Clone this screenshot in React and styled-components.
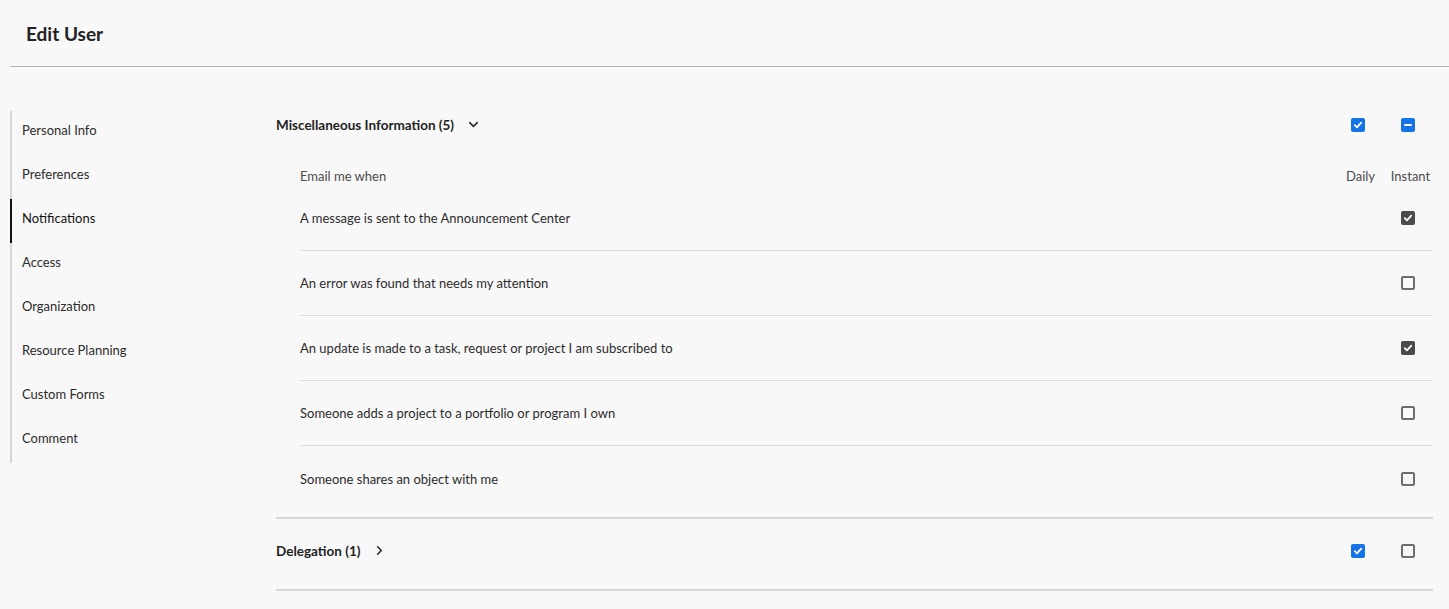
import React from 'react';
import styled, { createGlobalStyle } from 'styled-components';
import { ChevronDown, ChevronRight } from 'lucide-react';

const GlobalStyle = createGlobalStyle`
  body {
    margin: 0;
    background: #f8f8f8;
    font-family: Lato, "Noto Sans", sans-serif;
    color: #2c2c2c;
  }
`;

const navItems = [
  'Personal Info',
  'Preferences',
  'Notifications',
  'Access',
  'Organization',
  'Resource Planning',
  'Custom Forms',
  'Comment',
];

const events = [
  { label: 'A message is sent to the Announcement Center', instant: true },
  { label: 'An error was found that needs my attention', instant: false },
  { label: 'An update is made to a task, request or project I am subscribed to', instant: true },
  { label: 'Someone adds a project to a portfolio or program I own', instant: false },
  { label: 'Someone shares an object with me', instant: false },
];

const CheckMark = () => (
  <svg width="10" height="10" viewBox="0 0 10 10">
    <path d="M1.8 5.2 L4 7.3 L8.2 2.6" fill="none" stroke="#fff" strokeWidth="1.8" strokeLinecap="round" strokeLinejoin="round" />
  </svg>
);

const DashMark = () => (
  <svg width="10" height="10" viewBox="0 0 10 10">
    <path d="M2 5 H8" stroke="#fff" strokeWidth="2" strokeLinecap="round" />
  </svg>
);

const Checkbox = ({ state, tone = 'blue' }) => (
  <Box $state={state} $tone={tone}>
    {state === 'checked' && <CheckMark />}
    {state === 'mixed' && <DashMark />}
  </Box>
);

const App = () => (
  <>
    <GlobalStyle />
    <Header>
      <Title>Edit User</Title>
    </Header>
    <Body>
      <SideNav>
        {navItems.map((item) => (
          <NavItem key={item} $active={item === 'Notifications'}>
            {item}
          </NavItem>
        ))}
      </SideNav>
      <Main>
        <Section>
          <SectionHeader>
            <SectionTitle>
              Miscellaneous Information (5)
              <ChevronDown size={15} strokeWidth={2.6} />
            </SectionTitle>
            <Cell><Checkbox state="checked" /></Cell>
            <Cell><Checkbox state="mixed" /></Cell>
          </SectionHeader>
          <EventList>
            <ColumnHeader>
              <HeadLabel>Email me when</HeadLabel>
              <ColLabel>Daily</ColLabel>
              <ColLabel>Instant</ColLabel>
            </ColumnHeader>
            {events.map((ev) => (
              <EventRow key={ev.label}>
                <EventLabel>{ev.label}</EventLabel>
                <Cell />
                <Cell>
                  <Checkbox state={ev.instant ? 'checked' : 'empty'} tone="dark" />
                </Cell>
              </EventRow>
            ))}
          </EventList>
        </Section>
        <Section>
          <SectionHeader>
            <SectionTitle>
              Delegation (1)
              <ChevronRight size={15} strokeWidth={2.6} />
            </SectionTitle>
            <Cell><Checkbox state="checked" /></Cell>
            <Cell><Checkbox state="empty" /></Cell>
          </SectionHeader>
        </Section>
      </Main>
    </Body>
  </>
);

const Header = styled.header`
  height: 67px;
  margin-left: 10px;
  padding-left: 16px;
  display: flex;
  align-items: center;
  border-bottom: 1px solid #b3b3b3;
  box-sizing: border-box;
`;

const Title = styled.h1`
  margin: 0;
  font-size: 19px;
  font-weight: 700;
  color: #222;
`;

const Body = styled.div`
  display: flex;
  padding: 26px 16px 0 10px;
`;

const SideNav = styled.nav`
  width: 266px;
  flex-shrink: 0;
  margin-top: 18px;
  align-self: flex-start;
  border-left: 2px solid #d6d6d6;
  box-sizing: border-box;
`;

const NavItem = styled.div`
  height: 44px;
  box-sizing: border-box;
  display: flex;
  align-items: center;
  padding: 0 0 6px 10px;
  margin-left: -2px;
  border-left: 2px solid ${({ $active }) => ($active ? '#111' : 'transparent')};
  font-size: 13px;
  color: ${({ $active }) => ($active ? '#111' : '#2c2c2c')};
`;

const Main = styled.main`
  flex: 1;
  min-width: 0;
`;

const Section = styled.section`
  padding: 18px 0 24px;
  border-bottom: 2px solid #d6d6d6;
`;

const SectionHeader = styled.div`
  display: grid;
  grid-template-columns: 1fr 50px 50px;
  align-items: center;
  height: 28px;
`;

const SectionTitle = styled.div`
  display: flex;
  align-items: center;
  gap: 12px;
  font-size: 13.5px;
  font-weight: 700;
  color: #1f1f1f;
  padding-bottom: 1px;

  svg {
    color: #2c2c2c;
  }
`;

const Cell = styled.div`
  display: flex;
  justify-content: center;
  align-items: center;
`;

const Box = styled.span`
  width: 14px;
  height: 14px;
  box-sizing: border-box;
  border-radius: 2px;
  display: inline-flex;
  align-items: center;
  justify-content: center;
  background: ${({ $state, $tone }) =>
    $state === 'empty' ? 'transparent' : $tone === 'dark' ? '#4b4b4b' : '#1473e6'};
  border: ${({ $state }) => ($state === 'empty' ? '2px solid #6e6e6e' : 'none')};
`;

const EventList = styled.div`
  margin: 27px 0 -24px 24px;
  padding-bottom: 6px;
`;

const ColumnHeader = styled.div`
  display: grid;
  grid-template-columns: 1fr 50px 50px;
  align-items: center;
  height: 20px;
`;

const HeadLabel = styled.div`
  font-size: 13px;
  color: #4b4b4b;
`;

const ColLabel = styled.div`
  font-size: 13px;
  color: #4b4b4b;
  text-align: center;
  padding-left: 5px;
`;

const EventRow = styled.div`
  display: grid;
  grid-template-columns: 1fr 50px 50px;
  align-items: center;
  height: 65px;
  box-sizing: border-box;
  border-bottom: 1px solid #dcdcdc;

  &:last-child {
    border-bottom: none;
  }
`;

const EventLabel = styled.div`
  font-size: 13px;
  color: #2c2c2c;
`;

export default App;
